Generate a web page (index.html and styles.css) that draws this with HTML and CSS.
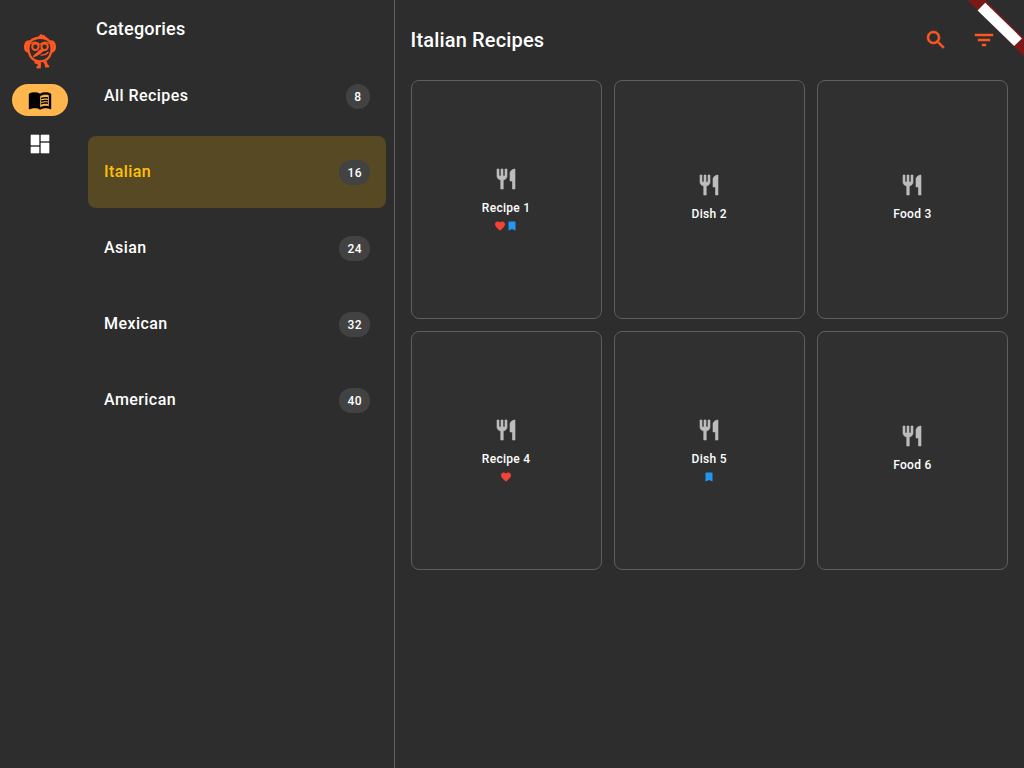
FILE: index.html
```
<!DOCTYPE html>
<html lang="en">
<head>
<meta charset="utf-8">
<title>Recipes</title>
<link rel="stylesheet" href="styles.css">
</head>
<body>
<svg class="defs" width="0" height="0">
  <symbol id="fork" viewBox="0 0 24 24"><path d="M11 9H9V2H7v7H5V2H3v7c0 2.120 1.660 3.840 3.750 3.970V22h2.500v-9.030C11.340 12.840 13 11.120 13 9V2h-2v7zm5-3v8h2.500v8H21V2c-2.760 0-5 2.240-5 4z"/></symbol>
  <symbol id="heart" viewBox="0 0 24 24"><path d="M12 21.350l-1.450-1.320C5.400 15.360 2 12.280 2 8.500 2 5.420 4.420 3 7.500 3c1.740 0 3.410.81 4.500 2.090C13.090 3.810 14.760 3 16.500 3 19.580 3 22 5.420 22 8.500c0 3.780-3.400 6.860-8.550 11.540L12 21.350z"/></symbol>
  <symbol id="mark" viewBox="0 0 24 24"><path d="M17 3H7c-1.100 0-1.990.9-1.990 2L5 21l7-3 7 3V5c0-1.100-.9-2-2-2z"/></symbol>
</svg>
<div class="app">
  <nav class="rail">
    <svg class="logo" viewBox="0 0 40 42">
      <g fill="currentColor">
        <path d="M12 11C14 7.500 17 6.500 19 6.200C19.500 4.800 20.500 4 22.200 4C21.900 4.600 22 5 22.300 5.200C24 4.600 25.500 5.500 25.300 6.600C27 7.300 28.500 9 29 11L24 9H17Z"/>
        <path d="M10.500 10.500C6 9.300 4 13 4 17C4 20.500 6 23 9.500 22.500L9 19L9.700 14Z"/>
        <path d="M29.500 10.500C34 9.300 36 13 36 17C36 20.500 34 23 30.500 22.500L31 19L30.300 14Z"/>
        <path d="M22.500 18.500L24.200 20.800C21.500 22.500 19.500 25.800 12.700 27.400C13.900 23.500 18 22.500 19 20Z"/>
        <path d="M14.200 30.800L21 32.500L20.800 38.200L17.200 38.600L16 37L18 35.500L17.300 34L14.600 33.400Z"/>
        <path d="M22.800 32L26.800 31L27.500 34.300L29.500 36L28.500 37.500L25.300 37.400L24.500 34Z"/>
      </g>
      <g fill="none" stroke="currentColor">
        <path stroke-width="2.300" d="M12 9.800C9 13 7.900 18.500 8.900 22.500C10.300 28 14.500 31.300 20 31.300S29.700 28 31.100 22.500C32.100 18.500 31 13 28 9.800C24 7.300 16 7.300 12 9.800Z"/>
        <circle cx="15.400" cy="16.800" r="3.200" stroke-width="2"/>
        <circle cx="24.600" cy="16.800" r="3.200" stroke-width="2"/>
        <path stroke-width="1.200" d="M11 14C13 11.500 17 11.500 20 14.500C23 11.500 27 11.500 29 14M20.500 25C24 25.300 26.500 24.300 28.500 22"/>
      </g>
    </svg>
    <div class="pill">
      <svg width="24" height="24" viewBox="0 0 24 24"><path class="book" d="M21 5c-1.110-.35-2.330-.5-3.500-.5-1.950 0-4.050.4-5.500 1.500-1.450-1.100-3.550-1.500-5.500-1.500S2.450 4.900 1 6v14.650c0 .25.25.5.5.5.1 0 .15-.05.25-.05C3.100 20.450 5.050 20 6.500 20c1.950 0 4.050.4 5.500 1.500 1.350-.85 3.800-1.500 5.500-1.500 1.650 0 3.350.3 4.750 1.050.1.050.15.050.25.050.25 0 .5-.25.5-.5V6c-.6-.45-1.250-.75-2-1zm0 13.500c-1.100-.35-2.300-.5-3.500-.5-1.700 0-4.150.65-5.500 1.500V8c1.350-.85 3.800-1.500 5.500-1.500 1.200 0 2.400.15 3.500.5v11.500z"/><path d="M17.500 10.500c.88 0 1.730.09 2.500.26V9.240c-.79-.15-1.640-.24-2.500-.24-1.700 0-3.240.29-4.500.83v1.660c1.130-.64 2.700-.99 4.500-.99zM13 12.490v1.660c1.130-.64 2.700-.99 4.500-.99.88 0 1.730.09 2.500.26V11.900c-.79-.15-1.640-.24-2.500-.24-1.700 0-3.240.3-4.500.83zM17.500 14.330c-1.700 0-3.240.29-4.500.83v1.660c1.130-.64 2.700-.99 4.500-.99.88 0 1.730.09 2.500.26v-1.520c-.79-.16-1.640-.24-2.500-.24z"/></svg>
    </div>
    <svg class="dash" width="24" height="24" viewBox="0 0 24 24"><path d="M3 13h8V3H3v10zm0 8h8v-6H3v6zm10 0h8V11h-8v10zm0-18v6h8V3h-8z"/></svg>
  </nav>
  <aside class="cats">
    <h2 class="cats-title">Categories</h2>
    <ul class="list">
      <li class="cat"><span class="label">All Recipes</span><b class="count">8</b></li>
      <li class="cat active"><span class="label">Italian</span><b class="count">16</b></li>
      <li class="cat"><span class="label">Asian</span><b class="count">24</b></li>
      <li class="cat"><span class="label">Mexican</span><b class="count">32</b></li>
      <li class="cat"><span class="label">American</span><b class="count">40</b></li>
    </ul>
  </aside>
  <main class="main">
    <header class="head">
      <h1 class="title">Italian Recipes</h1>
      <svg class="act" viewBox="0 0 24 24"><path d="M15.500 14h-.79l-.28-.27C15.410 12.590 16 11.110 16 9.500 16 5.910 13.090 3 9.500 3S3 5.910 3 9.500 5.910 16 9.500 16c1.610 0 3.090-.59 4.230-1.570l.27.28v.79l5 4.990L20.490 19l-4.990-5zm-6 0C7.010 14 5 11.990 5 9.500S7.010 5 9.500 5 14 7.010 14 9.500 11.990 14 9.500 14z"/></svg>
      <svg class="act" viewBox="0 0 24 24"><path d="M10 18h4v-2h-4v2zM3 6v2h18V6H3zm3 7h12v-2H6v2z"/></svg>
    </header>
    <section class="grid">
      <article class="card"><svg class="fork"><use href="#fork"/></svg><p class="name">Recipe 1</p><div class="tags"><svg class="heart"><use href="#heart"/></svg><svg class="mark"><use href="#mark"/></svg></div></article>
      <article class="card"><svg class="fork"><use href="#fork"/></svg><p class="name">Dish 2</p></article>
      <article class="card"><svg class="fork"><use href="#fork"/></svg><p class="name">Food 3</p></article>
      <article class="card"><svg class="fork"><use href="#fork"/></svg><p class="name">Recipe 4</p><div class="tags"><svg class="heart"><use href="#heart"/></svg></div></article>
      <article class="card"><svg class="fork"><use href="#fork"/></svg><p class="name">Dish 5</p><div class="tags"><svg class="mark"><use href="#mark"/></svg></div></article>
      <article class="card"><svg class="fork"><use href="#fork"/></svg><p class="name">Food 6</p></article>
    </section>
  </main>
  <svg class="ribbon" width="64" height="64" viewBox="0 0 64 64">
    <path fill="#7b1919" d="M7.400 0H25.400L64 38.600V56.600Z"/>
    <path fill="#fff" d="M25.200 2.700L61.900 38.400L54.200 46.100L17.600 10.500Z"/>
    <path stroke="#e6d8d8" stroke-width=".4" stroke-dasharray="1 1" d="M32.500 9.800L24.900 17.600M39.900 17L32.200 24.700M47.200 24.100L39.600 31.900M54.600 31.300L46.900 39"/>
  </svg>
</div>
</body>
</html>
```
FILE: styles.css
```
* { box-sizing: border-box; }
body { margin: 0; background: #2d2d2d; color: #fff; font-family: Roboto, sans-serif; }
h1, h2, p, ul { margin: 0; padding: 0; font-weight: 500; }
svg { display: block; flex: none; }
.defs { position: absolute; }
.app { position: relative; display: flex; width: 1024px; height: 768px; overflow: hidden; }
.rail { width: 80px; padding-top: 30px; display: flex; flex-direction: column; align-items: center; }
.logo { width: 40px; height: 42px; color: #ff5722; }
.pill { width: 56px; height: 32px; margin-top: 12px; border-radius: 16px; background: #ffb74d; display: flex; align-items: center; justify-content: center; }
.book { stroke: #000; stroke-width: .4; }
.dash { margin-top: 16px; fill: #fff; stroke: #fff; stroke-width: .6; }
.cats { width: 314.6px; padding: 16px 8px 0; border-right: 1px solid #616161; }
.cats-title { padding-left: 8px; font-size: 18px; line-height: 26px; letter-spacing: .2px; }
.list { list-style: none; margin-top: 18px; display: flex; flex-direction: column; gap: 4px; }
.cat { height: 72px; padding: 0 16px; border-radius: 8px; display: flex; align-items: center; justify-content: space-between; font-size: 16px; font-weight: 500; letter-spacing: .43px; }
.label { padding-bottom: 2px; }
.active { background: #564923; color: #ffc107; }
.count { min-width: 24px; text-align: center; padding: 1px 7.5px 0 8px; height: 25px; line-height: 25px; border-radius: 12px; background: #424242; color: #fff; font-size: 12px; font-weight: 500; letter-spacing: .5px; }
.main { flex: 1; padding: 16px 16px 0; }
.head { height: 48px; display: flex; align-items: center; gap: 24px; padding-right: 12px; }
.title { flex: 1; font-size: 20px; line-height: 28px; letter-spacing: .16px; }
.act { width: 24px; height: 24px; fill: #ff5722; stroke: #ff5722; stroke-width: .5; }
.grid { margin-top: 16px; display: grid; grid-template-columns: repeat(3, 1fr); grid-auto-rows: 239px; gap: 12px; }
.card { border: 1px solid #5e5e5e; border-radius: 8px; background: #303030; display: flex; flex-direction: column; align-items: center; justify-content: center; }
.fork { width: 24px; height: 24px; margin-right: .4px; fill: #bdbdbd; stroke: #bdbdbd; stroke-width: .6; }
.name { margin-top: 8px; padding-bottom: 3px; font-size: 12px; line-height: 19px; letter-spacing: .3px; }
.tags { height: 12px; margin: -1px .4px 1px 0; display: flex; }
.tags svg { width: 12px; height: 12px; }
.heart { fill: #f44336; }
.mark { fill: #2196f3; }
.ribbon { position: absolute; top: 0; right: 0; left: 960px; }
```
